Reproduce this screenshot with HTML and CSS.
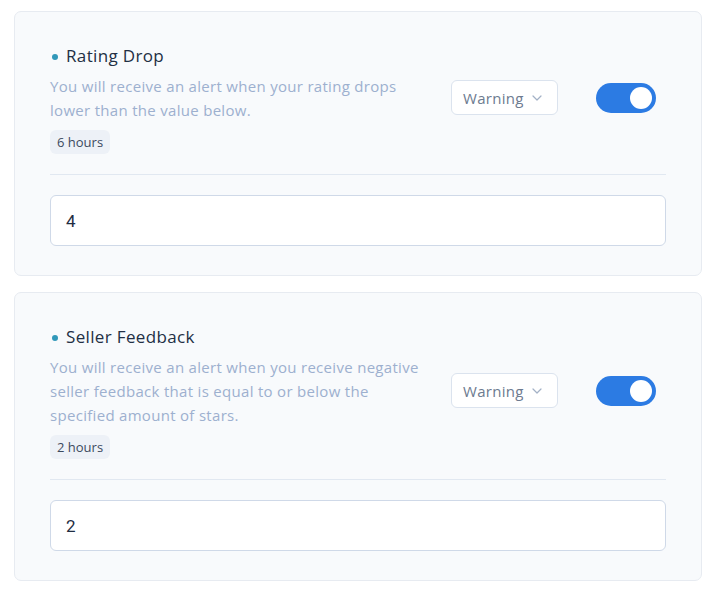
FILE: index.html
```html
<!DOCTYPE html>
<html lang="en">
<head>
<meta charset="utf-8">
<title>Alerts</title>
<link rel="stylesheet" href="styles.css">
</head>
<body>
<div class="list">
  <section class="card">
    <div class="top">
      <div class="info">
        <h3 class="title"><span class="dot"></span>Rating Drop</h3>
        <p class="desc">You will receive an alert when your rating drops lower than the value below.</p>
        <span class="badge">6 hours</span>
      </div>
      <div class="controls">
        <div class="select">Warning
          <svg class="chev" width="10" height="6" viewBox="0 0 10 6"><path d="M1 1l4 4 4-4" fill="none" stroke="#a3b1c6" stroke-width="1.2" stroke-linecap="round" stroke-linejoin="round"/></svg>
        </div>
        <div class="toggle"><span class="knob"></span></div>
      </div>
    </div>
    <hr class="divider">
    <div class="input">4</div>
  </section>
  <section class="card">
    <div class="top">
      <div class="info">
        <h3 class="title"><span class="dot"></span>Seller Feedback</h3>
        <p class="desc">You will receive an alert when you receive negative seller feedback that is equal to or below the specified amount of stars.</p>
        <span class="badge">2 hours</span>
      </div>
      <div class="controls">
        <div class="select">Warning
          <svg class="chev" width="10" height="6" viewBox="0 0 10 6"><path d="M1 1l4 4 4-4" fill="none" stroke="#a3b1c6" stroke-width="1.2" stroke-linecap="round" stroke-linejoin="round"/></svg>
        </div>
        <div class="toggle"><span class="knob"></span></div>
      </div>
    </div>
    <hr class="divider">
    <div class="input">2</div>
  </section>
</div>
</body>
</html>
```

FILE: styles.css
```css
* { box-sizing: border-box; }
body {
  margin: 0;
  background: #ffffff;
  font-family: "Open Sans", Lato, sans-serif;
}
.list {
  padding: 11px 13px 0 14px;
  display: flex;
  flex-direction: column;
  gap: 16px;
}
.card {
  background: #f8fafc;
  border: 1px solid #e7ebf1;
  border-radius: 7px;
  padding: 32px 35px 29px 35px;
}
.top {
  display: flex;
  align-items: center;
  gap: 20px;
}
.info {
  flex: 1;
  min-width: 0;
}
.title {
  margin: 0;
  font-size: 17px;
  font-weight: 400;
  letter-spacing: 0.35px;
  line-height: 24px;
  color: #222f44;
  display: flex;
  align-items: center;
}
.dot {
  width: 6px;
  height: 6px;
  border-radius: 50%;
  background: #3198b9;
  margin: 1px 8px 0 2px;
}
.desc {
  margin: 6px 0 0;
  padding-right: 6px;
  font-size: 15px;
  letter-spacing: 0.3px;
  line-height: 24px;
  color: #9db0cf;
}
.badge {
  display: inline-block;
  margin-top: 8px;
  background: #edf1f7;
  color: #3c4a5e;
  font-size: 13px;
  line-height: 24px;
  height: 24px;
  padding: 0 7px;
  border-radius: 6px;
}
.controls {
  width: 215px;
  display: flex;
  align-items: center;
  margin-bottom: 3px;
}
.select {
  width: 107px;
  height: 35px;
  border: 1px solid #dbe3ee;
  border-radius: 6px;
  background: #ffffff;
  color: #6d7b90;
  font-size: 15px;
  letter-spacing: 0.3px;
  display: flex;
  align-items: center;
  padding-left: 11px;
  gap: 8px;
}
.chev { margin-top: 1px; }
.toggle {
  margin-left: 38px;
  width: 60px;
  height: 30px;
  border-radius: 15px;
  background: #2c7be3;
  display: flex;
  align-items: center;
  justify-content: flex-end;
  padding-right: 4px;
}
.knob {
  width: 22px;
  height: 22px;
  border-radius: 50%;
  background: #ffffff;
}
.divider {
  border: 0;
  border-top: 1px solid #e1e8f1;
  margin: 20px 0 20px;
}
.input {
  height: 51px;
  background: #ffffff;
  border: 1px solid #cfd9e8;
  border-radius: 6px;
  padding-left: 15px;
  display: flex;
  align-items: center;
  font-family: Roboto, sans-serif;
  font-size: 17px;
  color: #1f2d42;
}
```
